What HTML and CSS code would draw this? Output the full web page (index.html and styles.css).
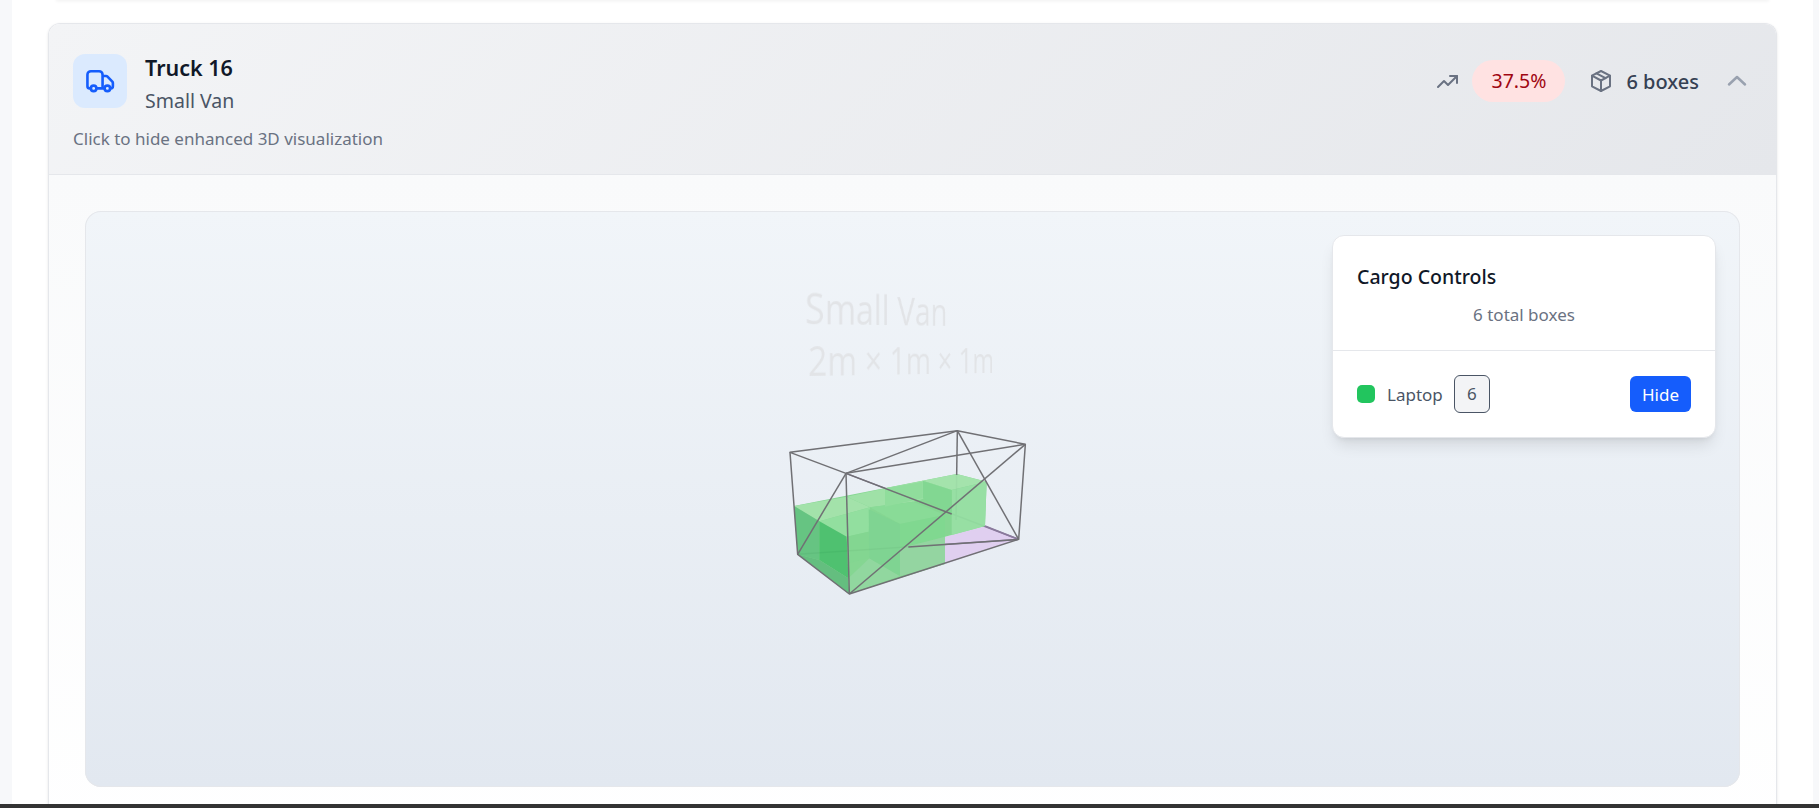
FILE: index.html
```html
<!DOCTYPE html>
<html>
<head>
	<meta charset="utf-8">
	<title>Truck 16</title>
	<link rel="stylesheet" href="styles.css">
</head>
<body>
<div class="page">
	<div class="prevcard"></div>
	<div class="truckcard">
		<div class="cardhead">
			<div class="headtop">
				<div class="headleft">
					<div class="truckicon">
						<svg width="33" height="33" viewBox="0 0 24 24" fill="none" stroke="#155dfc" stroke-width="1.9" stroke-linecap="round" stroke-linejoin="round">
							<path d="M9 17a2 2 0 1 1-4 0 2 2 0 0 1 4 0zM19 17a2 2 0 1 1-4 0 2 2 0 0 1 4 0z"/>
							<path d="M5 17H4a1.500 1.500 0 0 1-1.500-1.500V7A2.500 2.500 0 0 1 5 4.500h6A2.500 2.500 0 0 1 13.500 7v1H16a1.500 1.500 0 0 1 1.100.450l3.500 3.600a1.500 1.500 0 0 1 .4 1.050V15.500a1.500 1.500 0 0 1-1.500 1.500H19M9 17h6M13.500 8v9"/>
						</svg>
					</div>
					<div class="headtext">
						<div class="trucktitle">Truck 16</div>
						<div class="trucktype">Small Van</div>
					</div>
				</div>
				<div class="headright">
					<svg class="trend" width="24" height="24" viewBox="0 0 24 24" fill="none" stroke="#6a7282" stroke-width="2" stroke-linecap="round" stroke-linejoin="round"><path d="M2 18l6-6 4 4 9-9"/><path d="M14 7h7v7"/></svg>
					<span class="pct">37.5%</span>
					<svg class="cube" width="24" height="24" viewBox="0 0 24 24" fill="none" stroke="#6a7282" stroke-width="2" stroke-linecap="round" stroke-linejoin="round"><path d="M12 2l9 4.700v10.600L12 22l-9-4.700V6.700z"/><path d="M3 6.700l9 4.800 9-4.800"/><path d="M12 11.500V22"/><path d="M7.500 4.300l9 4.800"/></svg>
					<span class="boxes">6 boxes</span>
					<svg class="chev" width="24" height="24" viewBox="0 0 24 24" fill="none" stroke="#99a1af" stroke-width="2.500" stroke-linecap="round" stroke-linejoin="round"><path d="M4 15.500l8-7.500 8 7.500"/></svg>
				</div>
			</div>
			<div class="hint">Click to hide enhanced 3D visualization</div>
		</div>
		<div class="cardbody">
			<div class="viewport">
				<div class="label3d label3d-a">Small Van</div>
				<div class="label3d label3d-b">2m × 1m × 1m</div>
				<svg class="scene" width="280" height="190" viewBox="0 0 840 570">
					<polygon class="floor" points="525,350 645,318 746,358 525,432"/>
					<g class="wire wire-under">
						<line x1="83" y1="403" x2="746" y2="358"/>
						<line x1="228" y1="160" x2="746" y2="358"/>
						<line x1="560" y1="165" x2="558" y2="300"/>
						<line x1="645" y1="318" x2="746" y2="358"/>
					</g>
					<g class="boxes3d">
						<polygon fill="#7fd58c" points="72,258 560,162 650,185 645,318 525,350 525,432 238,522 83,403"/>
						<polygon fill="#9fe2a6" points="72,258 230,230 300,262 148,304"/>
						<polygon fill="#9be1a3" points="230,230 345,205 430,245 300,262"/>
						<polygon fill="#9de2a5" points="345,205 458,182 545,210 430,245"/>
						<polygon fill="#a0e3a8" points="458,182 560,162 650,185 545,210"/>
						<polygon fill="#8ddf9a" points="148,304 300,262 296,335 230,350"/>
						<polygon fill="#84da92" points="300,262 430,245 525,285 390,312"/>
						<polygon fill="#5ec27b" points="72,258 148,304 148,420 83,403"/>
						<polygon fill="#46bf68" points="148,304 230,350 235,475 148,420"/>
						<polygon fill="#5cbc78" points="83,403 148,420 235,475 238,522"/>
						<polygon fill="#8cd69a" points="238,522 235,475 298,415 390,468"/>
						<polygon fill="#79d38c" points="296,268 390,312 390,468 298,415"/>
						<polygon fill="#7dd58b" points="230,350 296,335 298,415 235,430"/>
						<polygon fill="#7ad78a" points="390,312 525,285 525,350 390,385"/>
						<polygon fill="#8fd49c" points="390,385 525,350 525,432 390,468"/>
						<polygon fill="#92df9f" points="545,210 650,185 645,318 545,345"/>
						<polygon fill="#7cd68c" points="458,182 545,210 545,285 458,235"/>
						<polygon fill="#8bdc97" points="345,205 458,185 458,235 345,260"/>
					</g>
					<g class="wire">
						<polygon points="60,97 562,32 766,73 228,160"/>
						<polyline points="60,97 83,403 238,522 746,358 766,73"/>
						<line x1="228" y1="160" x2="238" y2="522"/>
						<line x1="562" y1="32" x2="560" y2="165"/>
						<line x1="228" y1="160" x2="562" y2="32"/>
						<line x1="228" y1="160" x2="83" y2="403"/>
						<line x1="228" y1="160" x2="545" y2="282"/>
						<line x1="562" y1="32" x2="746" y2="358"/>
						<line x1="238" y1="522" x2="766" y2="73"/>
						<line x1="415" y1="381" x2="746" y2="358"/>
					</g>
				</svg>
				<div class="controls">
					<div class="controlshead">
						<div class="controlstitle">Cargo Controls</div>
						<div class="controlscount">6 total boxes</div>
					</div>
					<div class="controlsrow">
						<div class="itemleft">
							<span class="dot"></span>
							<span class="itemname">Laptop</span>
							<span class="itemcount">6</span>
						</div>
						<button class="hidebtn">Hide</button>
					</div>
				</div>
			</div>
		</div>
	</div>
</div>
<div class="bottombar"></div>
</body>
</html>
```
FILE: styles.css
```css
html, body {
	margin: 0;
	height: 808px;
	overflow: hidden;
}
body {
	background: #f7f8fa;
	font-family: "Noto Sans", "Open Sans", sans-serif;
	color: #101828;
}
.page {
	margin: 0 6px 0 12px;
	height: 804px;
	padding: 0 36px;
	background: #fff;
	overflow: hidden;
}
.prevcard {
	height: 1px;
	margin: -1px 8px 23px;
	box-shadow: 0 1px 3px rgba(0, 0, 0, .12);
}
.truckcard {
	border: 1px solid #e5e7eb;
	border-bottom: 0;
	border-radius: 12px 12px 0 0;
	box-shadow: 0 1px 3px rgba(0, 0, 0, .1);
	overflow: hidden;
	height: 800px;
}
.cardhead {
	height: 151px;
	box-sizing: border-box;
	padding: 30px 24px 0;
	background: linear-gradient(135deg, #f3f4f6, #e5e7eb);
	border-bottom: 1px solid #e5e7eb;
}
.headtop {
	display: flex;
	justify-content: space-between;
}
.headleft {
	display: flex;
	align-items: flex-start;
	gap: 18px;
}
.truckicon {
	width: 54px;
	height: 54px;
	border-radius: 12px;
	background: #dbeafe;
	display: flex;
	align-items: center;
	justify-content: center;
}
.headtext {
	margin-top: -3px;
}
.trucktitle {
	font-size: 21.500px;
	font-weight: 600;
	line-height: 33px;
}
.trucktype {
	font-size: 19.500px;
	line-height: 33px;
	color: #4a5565;
}
.headright {
	display: flex;
	align-items: center;
	height: 42px;
	margin: 6px 3px 0 0;
}
.pct {
	margin-left: 12px;
	width: 93px;
	height: 42px;
	line-height: 42px;
	text-align: center;
	border-radius: 21px;
	background: #ffe2e2;
	color: #9f0712;
	font-size: 19.500px;
}
.cube {
	margin-left: 24px;
}
.boxes {
	margin-left: 13px;
	font-size: 20px;
	font-weight: 500;
	color: #364153;
}
.chev {
	margin-left: 26px;
}
.hint {
	margin-top: 10px;
	font-size: 17px;
	line-height: 24px;
	color: #6a7282;
}
.cardbody {
	height: 649px;
	padding: 36px 36px 0;
	background: linear-gradient(#f9fafb, #fff);
}
.viewport {
	position: relative;
	height: 576px;
	border-radius: 16px;
	background: linear-gradient(#f1f5f9, #e2e8f0);
	box-shadow: inset 0 0 0 1px #e5e7eb;
	overflow: hidden;
}
.label3d {
	position: absolute;
	font-family: "Open Sans", sans-serif;
	color: #e2e4e7;
	white-space: nowrap;
}
.label3d-a {
	left: 720px;
	top: 66px;
	font-size: 44px;
	transform-origin: left bottom;
	transform: perspective(420px) rotateY(23deg) scaleX(.9);
}
.label3d-b {
	left: 723px;
	top: 120px;
	font-size: 42px;
	transform-origin: left center;
	transform: perspective(480px) rotateY(26deg) scaleX(.91);
}
.scene {
	position: absolute;
	left: 685px;
	top: 209px;
}
.floor { fill: #e0cff0; }
.boxes3d { opacity: .94; }
.wire {
	fill: none;
	stroke: #707074;
	stroke-width: 4.500;
	stroke-linejoin: round;
}
.wire-under {
	stroke: #8a7a9c;
}
.controls {
	position: absolute;
	top: 24px;
	right: 24px;
	width: 384px;
	height: 203px;
	box-sizing: border-box;
	background: #fff;
	border: 1px solid #e5e7eb;
	border-radius: 12px;
	box-shadow: 0 10px 15px -3px rgba(0, 0, 0, .1), 0 4px 6px -4px rgba(0, 0, 0, .1);
}
.controlshead {
	height: 115px;
	box-sizing: border-box;
	padding: 27px 24px 0;
	border-bottom: 1px solid #e5e7eb;
}
.controlstitle {
	font-size: 19.500px;
	font-weight: 500;
	line-height: 28px;
}
.controlscount {
	margin-top: 13px;
	font-size: 17px;
	line-height: 22px;
	color: #6a7282;
	text-align: center;
}
.controlsrow {
	display: flex;
	align-items: center;
	justify-content: space-between;
	padding: 24px 24px 0;
}
.itemleft {
	display: flex;
	align-items: center;
}
.dot {
	width: 18px;
	height: 18px;
	border-radius: 5px;
	background: #22c55e;
}
.itemname {
	margin-left: 12px;
	font-size: 17px;
	color: #4a5565;
}
.itemcount {
	margin-left: 11px;
	width: 36px;
	height: 38px;
	box-sizing: border-box;
	border: 1px solid #4a5565;
	border-radius: 6px;
	background: #f3f4f6;
	text-align: center;
	line-height: 36px;
	font-size: 17px;
	color: #4a5565;
}
.hidebtn {
	width: 61px;
	height: 36px;
	border: 0;
	border-radius: 6px;
	background: #155dfc;
	color: #fff;
	font-family: inherit;
	font-size: 17px;
	padding: 0;
}
.bottombar {
	height: 4px;
	background: #333;
}
```
